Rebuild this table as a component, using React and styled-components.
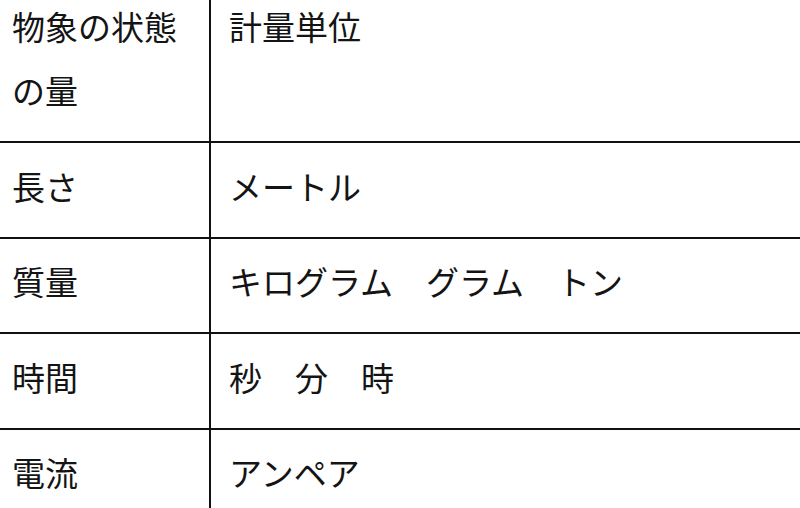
import styled, {createGlobalStyle} from 'styled-components';

const GlobalStyle = createGlobalStyle`
  html, body {
    margin: 0;
    padding: 0;
    background: #fff;
    overflow: hidden;
  }
  body {
    font-family: "Noto Sans CJK JP", "Noto Sans", sans-serif;
    color: #141414;
  }
`;

const rows = [
  {kind: '物象の状態\nの量', unit: '計量単位', head: true},
  {kind: '長さ', unit: 'メートル'},
  {kind: '質量', unit: 'キログラム　グラム　トン'},
  {kind: '時間', unit: '秒　分　時'},
  {kind: '電流', unit: 'アンペア'},
];

function App() {
  return (
    <>
      <GlobalStyle />
      <Frame>
        <Table>
          {rows.map((row) => (
            <Row key={row.kind} head={row.head}>
              <Kind head={row.head}>{row.kind}</Kind>
              <Unit head={row.head}>{row.unit}</Unit>
            </Row>
          ))}
        </Table>
      </Frame>
    </>
  );
}

export default App;

// 表の上端は画面の外に切れている
const Frame = styled.div`
  width: 800px;
  height: 508px;
  overflow: hidden;
`;

const Table = styled.div`
  margin-top: -6px;
`;

const Row = styled.div`
  display: grid;
  grid-template-columns: 211px 1fr;
  height: ${({head}) => (head ? '147px' : '93.5px')};
  border-bottom: 2px solid #111;
  box-sizing: content-box;
`;

const Cell = styled.div`
  font-size: 33px;
  line-height: 64px;
  white-space: pre-line;
  display: flex;
  align-items: ${({head}) => (head ? 'flex-start' : 'center')};
  padding-bottom: ${({head}) => (head ? '0' : '8px')};
  box-sizing: border-box;
`;

const Kind = styled(Cell)`
  padding-left: 12px;
  border-right: 2px solid #111;
`;

const Unit = styled(Cell)`
  padding-left: 18px;
`;
